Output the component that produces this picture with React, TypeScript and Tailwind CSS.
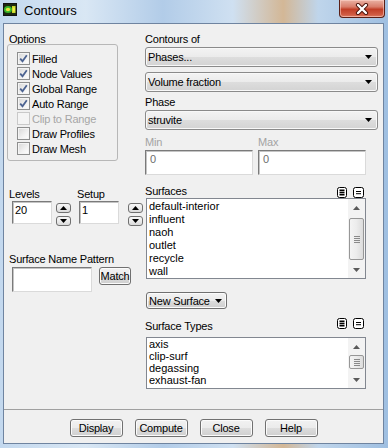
import React from "react";

function TitleIcon() {
  return (
    <svg width="14" height="13" viewBox="0 0 14 13" className="ml-[3px] mt-[3px] shrink-0">
      <rect x="0" y="0" width="14" height="13" fill="#111" />
      <rect x="1" y="1" width="12" height="11" fill="#1d2a10" />
      <ellipse cx="5" cy="6.5" rx="4" ry="3.6" fill="#37b52a" />
      <ellipse cx="5" cy="6.5" rx="2.2" ry="1.8" fill="#e8e43a" />
      <rect x="9" y="3" width="3.5" height="7" fill="#c7d92a" />
      <rect x="9.8" y="4.5" width="2" height="4" fill="#f3ee4a" />
    </svg>
  );
}

function CloseButton() {
  return (
    <div className="absolute left-[339px] top-0 w-[46px] h-[18px] rounded-b-[4px] border border-t-0 border-[#5a1f16] bg-[linear-gradient(180deg,#eab2a4_0%,#d97d6b_40%,#c13e27_55%,#cf5a42_85%,#dc7b63_100%)] shadow-[inset_0_0_0_1px_rgba(255,215,205,0.55)] flex items-center justify-center">
      <svg width="14" height="12" viewBox="0 0 14 12">
        <path d="M3 2 L11 10 M11 2 L3 10" stroke="#4a120a" strokeWidth="4.2" strokeLinecap="round" />
        <path d="M3 2 L11 10 M11 2 L3 10" stroke="#ffffff" strokeWidth="2.4" strokeLinecap="round" />
      </svg>
    </div>
  );
}

function Check({ checked, disabled, label }: { checked?: boolean; disabled?: boolean; label: string }) {
  return (
    <div className="flex items-center h-[15px]">
      <div
        className={
          disabled
            ? "w-[13px] h-[13px] border border-[#c9c9c9] bg-[#f4f4f4] shrink-0"
            : "w-[13px] h-[13px] border border-[#8e8f8f] bg-[linear-gradient(135deg,#d6d6d6_0%,#f2f2f2_60%,#ffffff_100%)] shadow-[inset_0_0_0_1px_#f4f4f4] flex items-center justify-center shrink-0"
        }
      >
        {checked && (
          <svg width="9" height="9" viewBox="0 0 9 9">
            <path d="M1.2 4.6 L3.5 7.2 L7.8 1.2" stroke="#4c6391" strokeWidth="1.8" fill="none" />
          </svg>
        )}
      </div>
      <span className={disabled ? "ml-[2px] text-[#a6a6a6]" : "ml-[2px] text-black"}>{label}</span>
    </div>
  );
}

function Arrow() {
  return (
    <svg width="7" height="4" viewBox="0 0 7 4" className="shrink-0">
      <path d="M0 0 H7 L3.5 4 Z" fill="#000" />
    </svg>
  );
}

function Combo({ text, className }: { text: string; className: string }) {
  return (
    <div
      className={
        "h-[20px] w-[233px] rounded-[3px] border border-[#8a8a8a] bg-[linear-gradient(180deg,#f3f3f3_0%,#ebebeb_50%,#dddddd_51%,#d3d3d3_100%)] shadow-[inset_0_0_0_1px_#f8f8f8] flex items-center pl-[2px] pr-[5px] " +
        className
      }
    >
      <span className="flex-1">{text}</span>
      <Arrow />
    </div>
  );
}

function Field({ className, text, gray }: { className: string; text?: string; gray?: boolean }) {
  return (
    <div
      className={
        "bg-white border border-t-[#7a7a7a] border-l-[#7a7a7a] border-r-[#dadada] border-b-[#dadada] shadow-[inset_1px_1px_0_#c4c4c4] pl-[2px] pt-[2px] " +
        (gray ? "text-[#6d6d6d] " : "text-black ") +
        className
      }
    >
      {text}
    </div>
  );
}

function SpinBtn({ up }: { up?: boolean }) {
  return (
    <div className="w-[15px] h-[10px] rounded-[3px] border border-[#707070] bg-[linear-gradient(180deg,#f7f7f7_0%,#ebebeb_50%,#dadada_100%)] flex items-center justify-center">
      <svg width="7" height="4" viewBox="0 0 7 4">
        <path d={up ? "M0 4 H7 L3.5 0 Z" : "M0 0 H7 L3.5 4 Z"} fill="#000" />
      </svg>
    </div>
  );
}

function Spinner({ className }: { className: string }) {
  return (
    <div className={"flex flex-col gap-[3px] " + className}>
      <SpinBtn up />
      <SpinBtn />
    </div>
  );
}

function Btn({ className, children }: { className: string; children: React.ReactNode }) {
  return (
    <div
      className={
        "rounded-[3px] border border-[#707070] bg-[linear-gradient(180deg,#f2f2f2_0%,#ebebeb_50%,#dddddd_51%,#cfcfcf_100%)] shadow-[inset_0_0_0_1px_#fbfbfb] flex items-center justify-center " +
        className
      }
    >
      {children}
    </div>
  );
}

function AllIcon() {
  return (
    <svg width="10" height="11" viewBox="0 0 10 11" className="shrink-0">
      <rect x="0.5" y="0.5" width="9" height="10" rx="2" fill="#fff" stroke="#000" />
      <rect x="2.5" y="2.5" width="5" height="1.6" fill="#000" />
      <rect x="2.5" y="4.7" width="5" height="1.6" fill="#000" />
      <rect x="2.5" y="6.9" width="5" height="1.6" fill="#000" />
    </svg>
  );
}

function NoneIcon() {
  return (
    <svg width="11" height="11" viewBox="0 0 11 11" className="shrink-0">
      <rect x="0.5" y="0.5" width="10" height="10" rx="2" fill="#fff" stroke="#000" />
      <rect x="3" y="4" width="5" height="1" fill="#000" />
      <rect x="3" y="6.2" width="5" height="1" fill="#000" />
    </svg>
  );
}

function ScrollArrow({ up }: { up?: boolean }) {
  return (
    <div className="h-[17px] flex items-center justify-center">
      <svg width="7" height="4" viewBox="0 0 7 4">
        <path d={up ? "M0 4 H7 L3.5 0 Z" : "M0 0 H7 L3.5 4 Z"} fill="#5a5a5a" />
      </svg>
    </div>
  );
}

function Thumb({ className }: { className: string }) {
  return (
    <div
      className={
        "mx-[1px] rounded-[2px] border border-[#979797] bg-[linear-gradient(90deg,#f4f4f4_0%,#ececec_50%,#dcdcdc_100%)] flex items-center justify-center " +
        className
      }
    >
      <div className="flex flex-col gap-[1px]">
        <div className="w-[6px] h-[1px] bg-[#8a8a8a]" />
        <div className="w-[6px] h-[1px] bg-[#8a8a8a]" />
        <div className="w-[6px] h-[1px] bg-[#8a8a8a]" />
        <div className="w-[6px] h-[1px] bg-[#8a8a8a]" />
      </div>
    </div>
  );
}

export default function App() {
  const surfaces = ["default-interior", "influent", "naoh", "outlet", "recycle", "wall"];
  const types = ["axis", "clip-surf", "degassing", "exhaust-fan"];
  return (
    <div className="w-[388px] h-[448px] overflow-hidden relative font-['Liberation_Sans',Arial,sans-serif] text-[11px] leading-[12px] tracking-[-0.2px] text-black bg-[linear-gradient(90deg,#c3d8ee_0%,#d9e7f4_22%,#b2cce8_42%,#cfe0f1_60%,#d3b796_73%,#bfd5eb_82%,#9fbfe1_100%)]">
      <div className="h-[23px] flex items-start relative">
        <TitleIcon />
        <span className="ml-[7px] mt-[3px] text-[13px] leading-[16px] tracking-normal text-black">Contours</span>
        <CloseButton />
      </div>
      <div className="ml-[3px] w-[381px] h-[421px] border border-[#6f84a0] bg-[#f0f0f0] flex flex-col">
        <div className="h-[386px] border-b border-[#a0a0a0] flex">
          {/* left column */}
          <div className="w-[141px] pl-[3px] pt-[9px] flex flex-col">
            <div className="ml-[2px] h-[11px]">Options</div>
            <div className="w-[111px] h-[117px] border border-[#b7b7b7] rounded-[3px] pl-[9px] pt-[6px] flex flex-col">
              <Check checked label="Filled" />
              <Check checked label="Node Values" />
              <Check checked label="Global Range" />
              <Check checked label="Auto Range" />
              <Check disabled label="Clip to Range" />
              <Check label="Draw Profiles" />
              <Check label="Draw Mesh" />
            </div>
            <div className="mt-[27px] flex">
              <div className="ml-[2px] w-[68px] flex flex-col">
                <div className="h-[12px]">Levels</div>
                <div className="mt-[1px] ml-[3px] flex items-start">
                  <Field className="w-[40px] h-[23px]" text="20" />
                  <Spinner className="ml-[4px] mt-[2px]" />
                </div>
              </div>
              <div className="flex flex-col">
                <div className="h-[12px]">Setup</div>
                <div className="mt-[1px] ml-[2px] flex items-start">
                  <Field className="w-[40px] h-[23px]" text="1" />
                  <Spinner className="ml-[9px] mt-[2px]" />
                </div>
              </div>
            </div>
            <div className="mt-[27px] ml-[2px] h-[12px]">Surface Name Pattern</div>
            <div className="mt-[2px] ml-[5px] flex items-start">
              <Field className="w-[80px] h-[25px]" />
              <Btn className="ml-[7px] w-[32px] h-[18px]">Match</Btn>
            </div>
          </div>
          {/* right column */}
          <div className="w-[233px] pt-[9px] flex flex-col">
            <div className="h-[12px]">Contours of</div>
            <Combo className="mt-[2px]" text="Phases..." />
            <Combo className="mt-[5px]" text="Volume fraction" />
            <div className="mt-[4px] h-[12px]">Phase</div>
            <Combo className="mt-[2px]" text="struvite" />
            <div className="mt-[6px] h-[12px] flex text-[#a3a3a3]">
              <span className="w-[113px]">Min</span>
              <span>Max</span>
            </div>
            <div className="mt-[2px] flex gap-[5px]">
              <Field className="w-[108px] h-[25px] pl-[4px]" text="0" gray />
              <Field className="w-[108px] h-[25px] pl-[4px]" text="0" gray />
            </div>
            <div className="mt-[10px] h-[12px] flex items-start">
              <span className="w-[192px]">Surfaces</span>
              <div className="mt-[2px] flex gap-[6px]">
                <AllIcon />
                <NoneIcon />
              </div>
            </div>
            <div className="mt-[1px] ml-[1px] w-[220px] h-[81px] border border-[#828790] bg-white flex">
              <div className="flex-1 pl-[2px] pt-[1px] leading-[13px] tracking-normal">
                {surfaces.map((s) => (
                  <div key={s} className="h-[13px]">
                    {s}
                  </div>
                ))}
              </div>
              <div className="w-[17px] bg-[#f3f3f3] flex flex-col">
                <ScrollArrow up />
                <Thumb className="mt-[2px] h-[42px]" />
                <div className="flex-1" />
                <ScrollArrow />
              </div>
            </div>
            <Btn className="mt-[13px] ml-[1px] w-[81px] h-[17px] justify-start pl-[2px] gap-[5px]">
              <span>New Surface</span>
              <Arrow />
            </Btn>
            <div className="mt-[9px] h-[14px] flex items-start">
              <span className="w-[192px] pt-[2px]">Surface Types</span>
              <div className="flex gap-[6px]">
                <AllIcon />
                <NoneIcon />
              </div>
            </div>
            <div className="mt-[5px] ml-[1px] w-[220px] h-[52px] border border-[#828790] bg-white flex">
              <div className="flex-1 pl-[2px] leading-[12px] tracking-normal">
                {types.map((s) => (
                  <div key={s} className="h-[12px]">
                    {s}
                  </div>
                ))}
              </div>
              <div className="w-[17px] bg-[#f3f3f3] flex flex-col">
                <ScrollArrow up />
                <Thumb className="h-[14px]" />
                <div className="flex-1" />
                <ScrollArrow />
              </div>
            </div>
          </div>
        </div>
        <div className="pt-[9px] flex justify-center gap-[12px]">
          <Btn className="w-[53px] h-[18px]">Display</Btn>
          <Btn className="w-[53px] h-[18px]">Compute</Btn>
          <Btn className="w-[53px] h-[18px]">Close</Btn>
          <Btn className="w-[53px] h-[18px]">Help</Btn>
        </div>
      </div>
    </div>
  );
}
